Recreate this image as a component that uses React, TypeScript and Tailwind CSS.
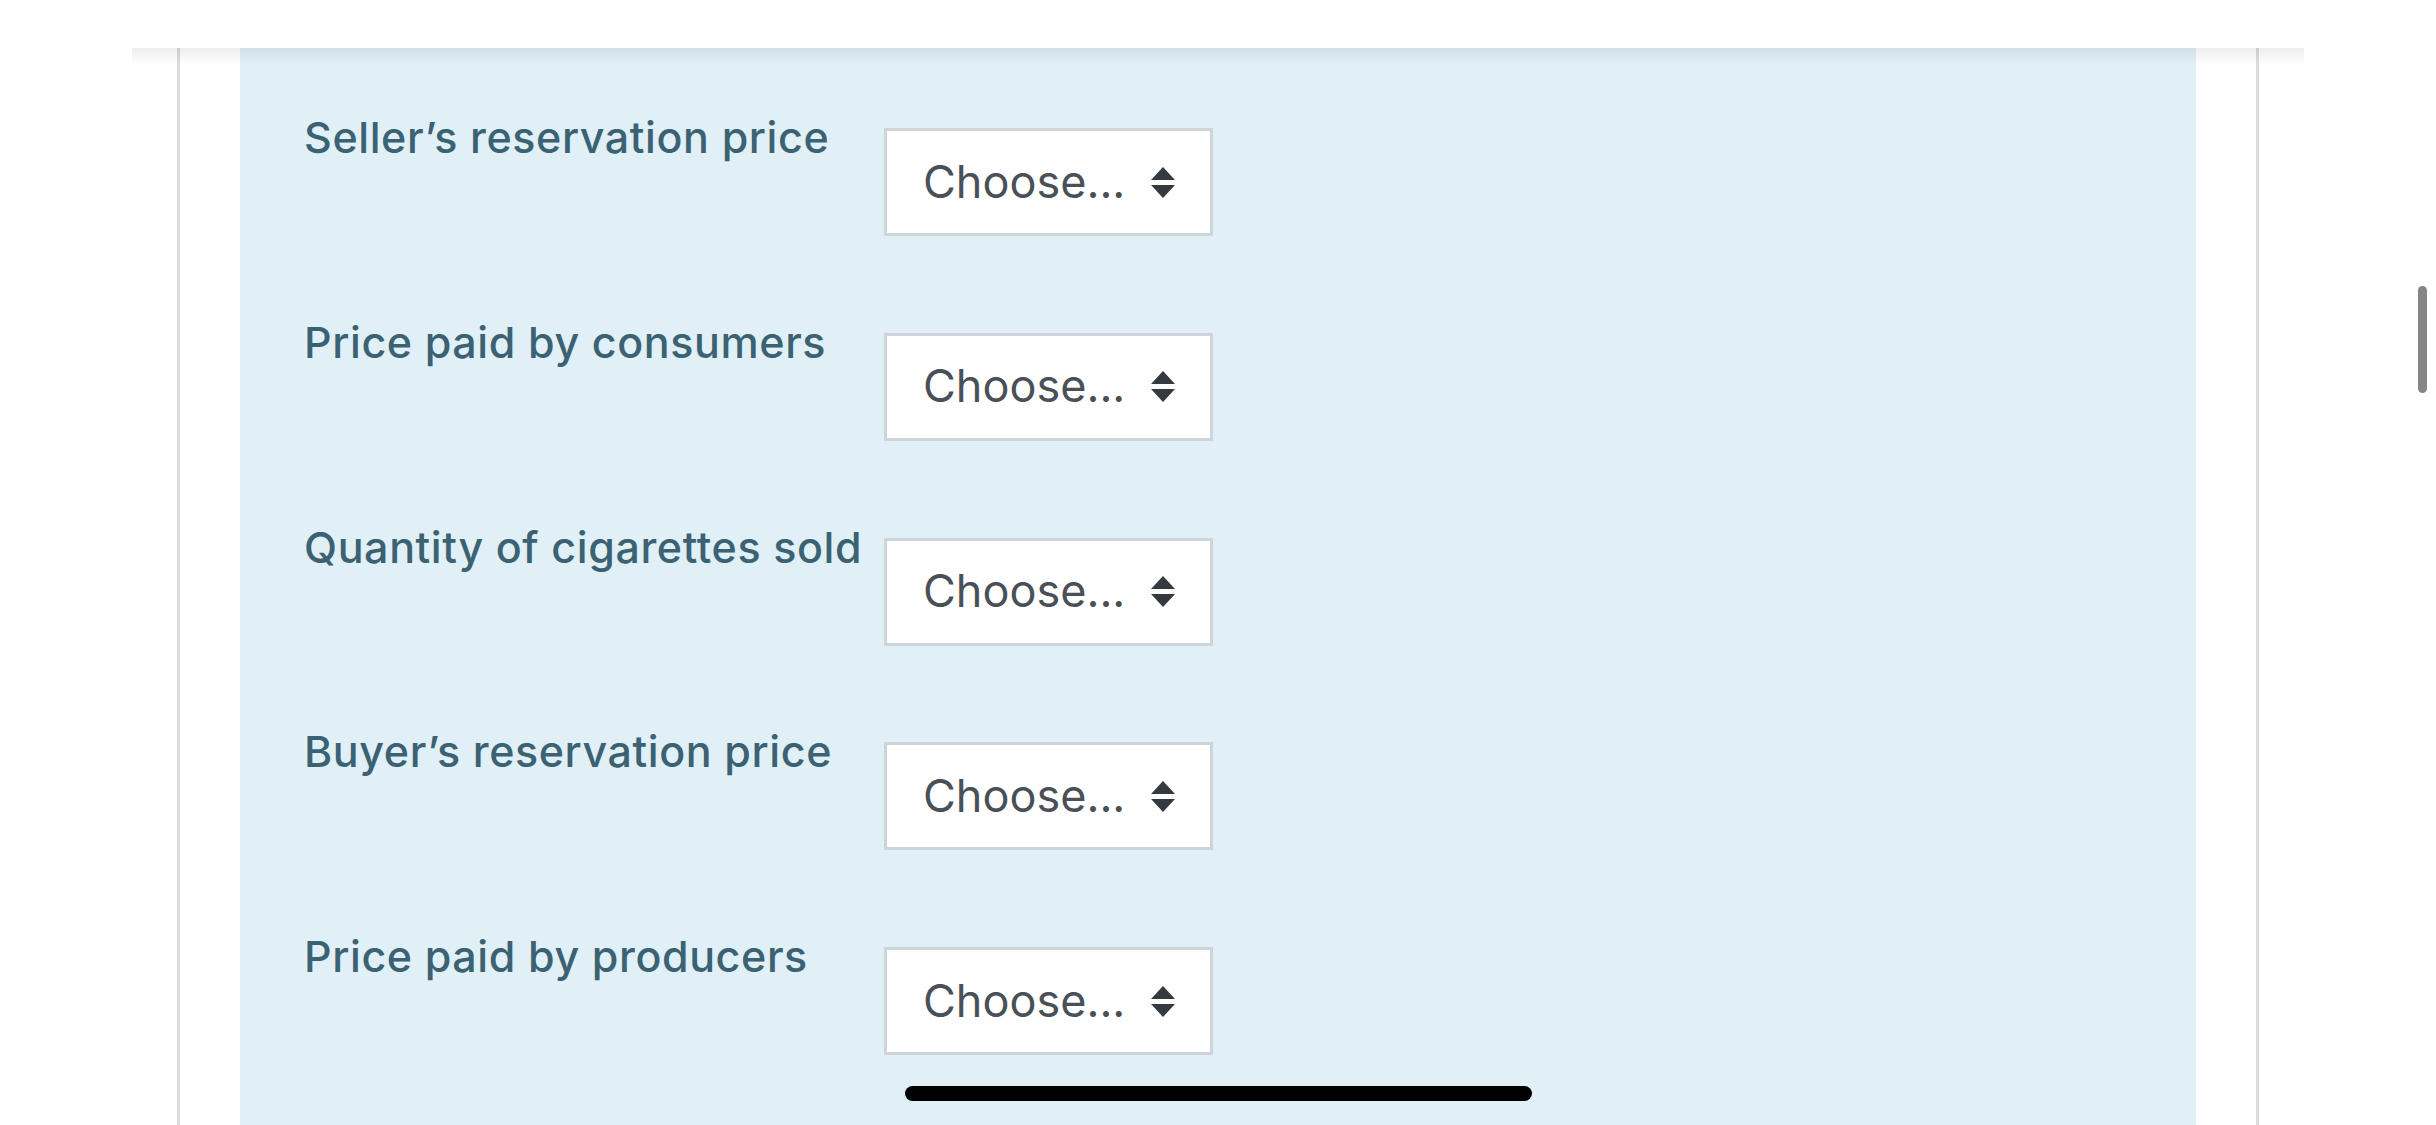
const fields = [
  "Seller’s reservation price",
  "Price paid by consumers",
  "Quantity of cigarettes sold",
  "Buyer’s reservation price",
  "Price paid by producers",
];

const SelectArrows = () => (
  <svg width="24" height="31" viewBox="0 0 24 31" className="shrink-0">
    <path d="M12 0 L24 13 L0 13 Z" fill="#343a40" />
    <path d="M0 18 L24 18 L12 31 Z" fill="#343a40" />
  </svg>
);

const ChooseSelect = () => (
  <div className="mt-[15px] flex h-[108px] w-[329px] shrink-0 items-center border-[3px] border-[#ced4da] bg-white pl-[36px] pr-[35px]">
    <span className="-mt-[2px] text-[45px] leading-none text-[#495057]">Choose...</span>
    <span className="ml-auto">
      <SelectArrows />
    </span>
  </div>
);

const App = () => {
  return (
    <div
      className="relative flex h-[1125px] w-full flex-col overflow-hidden bg-white"
      style={{ fontFamily: "Inter, 'Liberation Sans', sans-serif" }}
    >
      {/* top bar */}
      <div className="h-[48px] shrink-0 bg-white" />

      {/* page column */}
      <div className="ml-[177px] flex w-[2082px] flex-1 border-x-[3px] border-[#dcdcdc] px-[60px]">
        <div className="flex flex-1 flex-col gap-y-[81.75px] bg-[#e1eff7] pl-[64px] pt-[65px]">
          {fields.map((label) => (
            <div key={label} className="flex items-start">
              <div className="-mt-[1px] w-[580px] shrink-0 whitespace-nowrap text-[43px] font-medium leading-[50px] tracking-[0.6px] text-[#3b6272]">
                {label}
              </div>
              <ChooseSelect />
            </div>
          ))}
        </div>
      </div>

      {/* header shadow */}
      <div className="absolute left-[132px] top-[48px] h-[17px] w-[2172px] bg-gradient-to-b from-black/[0.07] to-transparent" />

      {/* scroll indicator */}
      <div className="absolute left-[2418px] top-[286px] h-[107px] w-[9px] rounded-full bg-[#858585]" />

      {/* home indicator */}
      <div className="absolute left-[905px] top-[1086px] h-[15px] w-[627px] rounded-full bg-black" />
    </div>
  );
};

export default App;
